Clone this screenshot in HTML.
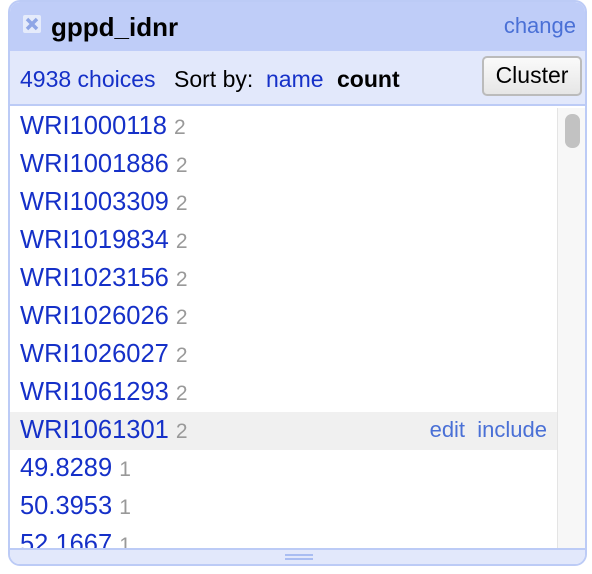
<!DOCTYPE html>
<html><head><style>
*{margin:0;padding:0;box-sizing:border-box}
body{width:592px;height:574px;background:#fff;font-family:"Liberation Sans",Arial,sans-serif;position:relative;overflow:hidden}
.panel{position:absolute;left:8px;top:0;width:579px;height:566px;border:2px solid #bccbf6;border-radius:12px;overflow:hidden;background:#fff}
.hdr{position:absolute;left:0;top:0;right:0;height:49px;background:#bfcdf8}
.x{position:absolute;left:13px;top:13px;width:18px;height:18px;background:#e5ebfb;border-radius:2px}
.title{position:absolute;left:41px;top:10px;font-size:26px;font-weight:bold;color:#000}
.change{position:absolute;right:9px;top:11px;font-size:22px;color:#4a70d6}
.bar{position:absolute;left:0;top:49px;right:0;height:55px;background:#e2e8fb;border-bottom:2px solid #bccbf6;font-size:23px}
.bar span{position:absolute;top:15px}
.btn{position:absolute;right:3px;top:5px;width:100px;height:40px;border:2px solid #bbb;border-radius:5px;background:linear-gradient(#fafafa,#e6e6e6);font-size:23px;text-align:center;line-height:35px;color:#000}
.list{position:absolute;left:0;top:106px;width:547px;height:440px;overflow:hidden}
.row{height:38px;line-height:36px;padding-left:10px;font-size:25.5px;color:#1530c8;position:relative;white-space:nowrap}
.row i{font-style:normal;color:#999;font-size:21px;margin-left:7px}
.row.h{background:#f0f0f0}
.row .a{position:absolute;right:10px;top:0;font-size:22px;color:#4a70d6}
.sb{position:absolute;left:547px;top:106px;width:30px;height:440px;background:#f7f7f7;border-left:1px solid #e4e4e4}
.th{position:absolute;left:7px;top:6px;width:15px;height:34px;background:#c2c2c2;border-radius:7px}
.ft{position:absolute;left:0;top:546px;right:0;height:18px;background:#e2e8fb;border-top:2px solid #bccbf6}
.ft b{position:absolute;left:275px;top:4px;width:28px;height:6px;border-top:2px solid #a9bdf2;border-bottom:2px solid #a9bdf2}
</style></head><body>
<div class="panel">
<div class="hdr"><div class="x"><svg width="18" height="18" viewBox="0 0 18 18"><path d="M4 4L14 14M14 4L4 14" stroke="#8fa6e6" stroke-width="3.5"/></svg></div><div class="title">gppd_idnr</div><div class="change">change</div></div>
<div class="bar"><span style="left:10px;color:#1530c8">4938 choices</span><span style="left:164px;color:#000">Sort by:</span><span style="left:256px;color:#1530c8">name</span><span style="left:327px;color:#000;font-weight:bold">count</span><div class="btn">Cluster</div></div>
<div class="list">
<div class="row">WRI1000118<i>2</i></div>
<div class="row">WRI1001886<i>2</i></div>
<div class="row">WRI1003309<i>2</i></div>
<div class="row">WRI1019834<i>2</i></div>
<div class="row">WRI1023156<i>2</i></div>
<div class="row">WRI1026026<i>2</i></div>
<div class="row">WRI1026027<i>2</i></div>
<div class="row">WRI1061293<i>2</i></div>
<div class="row h">WRI1061301<i>2</i><span class="a">edit&nbsp; include</span></div>
<div class="row">49.8289<i>1</i></div>
<div class="row">50.3953<i>1</i></div>
<div class="row">52.1667<i>1</i></div>
</div>
<div class="sb"><div class="th"></div></div>
<div class="ft"><b></b></div>
</div>
</body></html>
